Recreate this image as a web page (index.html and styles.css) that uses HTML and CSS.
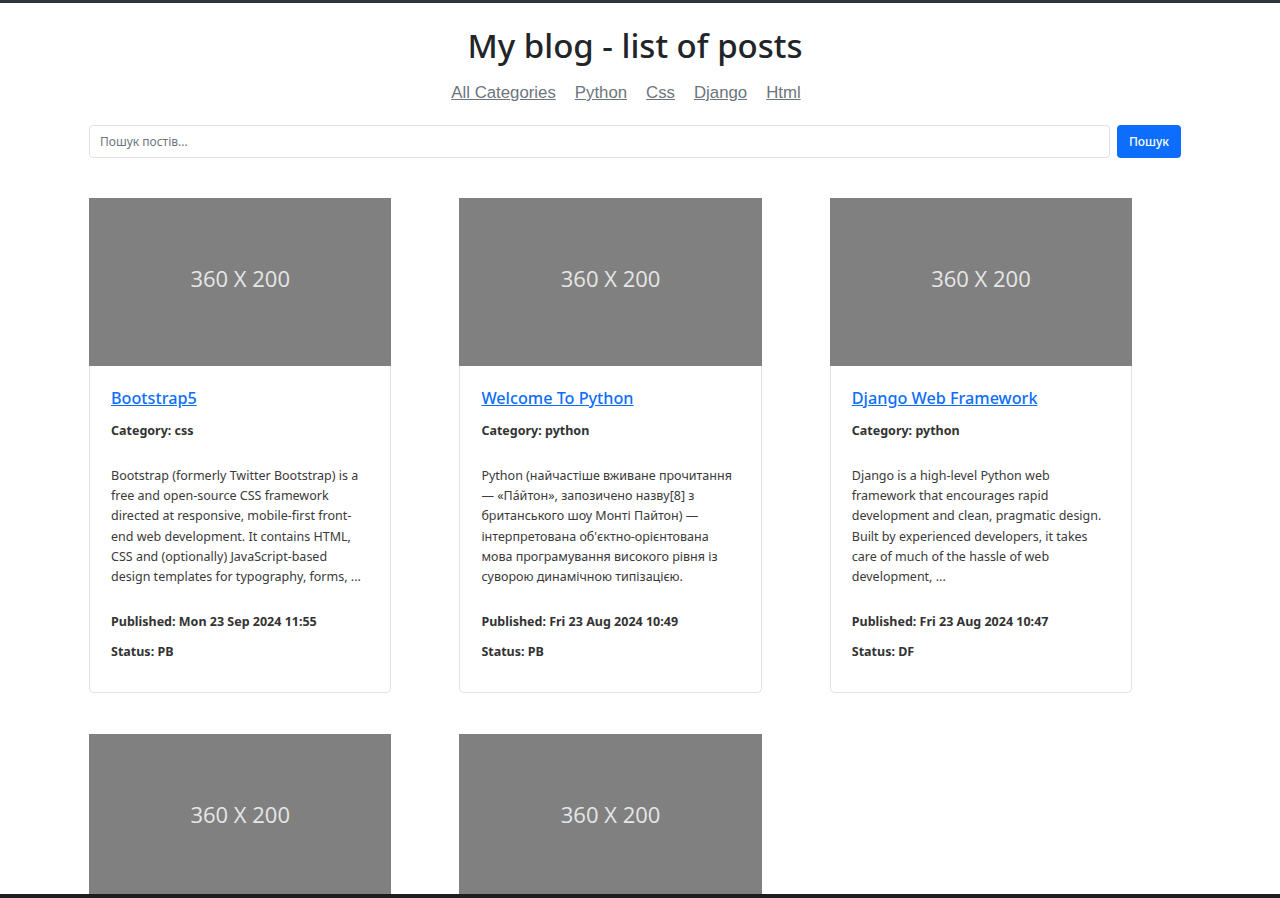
FILE: index.html
```html
<!DOCTYPE html>
<html lang="uk">
<head>
<meta charset="utf-8">
<title>My blog - list of posts</title>
<link rel="stylesheet" href="styles.css">
</head>
<body>
<div class="topline"></div>
<header class="header">
  <h1 class="title">My blog - list of posts</h1>
  <nav class="cats">
    <a href="#">All Categories</a>
    <a href="#">Python</a>
    <a href="#">Css</a>
    <a href="#">Django</a>
    <a href="#">Html</a>
  </nav>
</header>
<main class="container">
  <form class="search">
    <input class="search-input" type="text" placeholder="Пошук постів...">
    <button class="search-btn" type="button">Пошук</button>
  </form>
  <section class="grid">
    <article class="card">
      <div class="thumb">360 X 200</div>
      <div class="card-body">
        <h5 class="card-title"><a href="#">Bootstrap5</a></h5>
        <p class="meta">Category: css</p>
        <p class="desc">Bootstrap (formerly Twitter Bootstrap) is a free and open-source CSS framework directed at responsive, mobile-first front-end web development. It contains HTML, CSS and (optionally) JavaScript-based design templates for typography, forms, ...</p>
        <p class="meta pub">Published: Mon 23 Sep 2024 11:55</p>
        <p class="meta status">Status: PB</p>
      </div>
    </article>
    <article class="card">
      <div class="thumb">360 X 200</div>
      <div class="card-body">
        <h5 class="card-title"><a href="#">Welcome To Python</a></h5>
        <p class="meta">Category: python</p>
        <p class="desc">Python (найчастіше вживане прочитання — «Па́йтон», запозичено назву[8] з британського шоу Монті Пайтон) — інтерпретована об'єктно-орієнтована мова програмування високого рівня із суворою динамічною типізацією.</p>
        <p class="meta pub">Published: Fri 23 Aug 2024 10:49</p>
        <p class="meta status">Status: PB</p>
      </div>
    </article>
    <article class="card">
      <div class="thumb">360 X 200</div>
      <div class="card-body">
        <h5 class="card-title"><a href="#">Django Web Framework</a></h5>
        <p class="meta">Category: python</p>
        <p class="desc">Django is a high-level Python web framework that encourages rapid development and clean, pragmatic design. Built by experienced developers, it takes care of much of the hassle of web development, ...</p>
        <p class="meta pub">Published: Fri 23 Aug 2024 10:47</p>
        <p class="meta status">Status: DF</p>
      </div>
    </article>
    <article class="card">
      <div class="thumb">360 X 200</div>
      <div class="card-body">
        <h5 class="card-title"><a href="#">Html</a></h5>
        <p class="meta">Category: html</p>
      </div>
    </article>
    <article class="card">
      <div class="thumb">360 X 200</div>
      <div class="card-body">
        <h5 class="card-title"><a href="#">Css</a></h5>
        <p class="meta">Category: css</p>
      </div>
    </article>
  </section>
</main>
<div class="bottombar"></div>
</body>
</html>
```
FILE: styles.css
```css
* { box-sizing: border-box; }
html, body { margin: 0; padding: 0; }
body {
  background: #fff;
  color: #212529;
  font-family: "Noto Sans", "Open Sans", sans-serif;
}
.topline { height: 3px; background: #2e363d; }
.header {
  display: flex;
  flex-direction: column;
  align-items: center;
  padding-top: 22px;
}
.title {
  margin: 0;
  padding-right: 10px;
  font-size: 33px;
  font-weight: 500;
  line-height: 42px;
  color: #212529;
}
.cats {
  display: flex;
  gap: 19px;
  margin-top: 16px;
  padding-right: 28px;
  font-family: "Liberation Sans", Arial, sans-serif;
  font-size: 16.8px;
  line-height: 20px;
}
.cats a { color: #6c757d; text-decoration: underline; }
.container {
  padding: 0 99px 0 89px;
}
.search {
  display: flex;
  gap: 7px;
  margin-top: 22px;
}
.search-input {
  flex: 1;
  height: 33px;
  border: 1px solid #dee2e6;
  border-radius: 4px;
  padding: 0 10px;
  font-family: "Noto Sans", sans-serif;
  font-size: 12px;
  color: #212529;
}
.search-input::placeholder { color: #6c757d; }
.search-btn {
  width: 64px;
  height: 33px;
  border: 0;
  border-radius: 4px;
  background: #0d6efd;
  color: #fff;
  font-family: "Noto Sans", sans-serif;
  font-size: 12px;
  font-weight: 500;
}
.grid {
  display: grid;
  grid-template-columns: repeat(3, 302.4px);
  column-gap: 68px;
  row-gap: 41px;
  margin-top: 40px;
}
.card {
  display: flex;
  flex-direction: column;
}
.thumb {
  height: 168px;
  padding-bottom: 8px;
  background: #808080;
  color: #e6e6e6;
  display: flex;
  align-items: center;
  justify-content: center;
  font-family: "Open Sans", sans-serif;
  font-size: 22px;
}
.card-body {
  flex: 1;
  border: 1px solid #e2e2e2;
  border-top: 0;
  border-radius: 0 0 5px 5px;
  padding: 21px 21px 30px;
}
.card-title {
  margin: 0 0 12px;
  font-size: 16.2px;
  font-weight: 500;
  line-height: 22px;
}
.card-title a { color: #0d6efd; text-decoration: underline; }
.meta {
  margin: 0;
  font-size: 12.5px;
  font-weight: 700;
  line-height: 20px;
  color: #333;
}
.desc {
  margin: 25px 0 25px;
  font-size: 12.5px;
  line-height: 20.2px;
  color: #3a3a3a;
}
.status { margin-top: 10px; }
.bottombar {
  position: fixed;
  left: 0;
  right: 0;
  bottom: 0;
  height: 4px;
  background: #1e1e1e;
}
```
